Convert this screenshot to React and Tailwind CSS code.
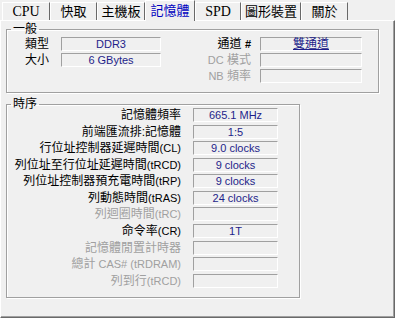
const tabs = [
  { name: "CPU", w: "w-[48px]", serif: true },
  { name: "快取", w: "w-[47px]" },
  { name: "主機板", w: "w-[48px]" },
  { name: "記憶體", w: "w-[50px]", active: true },
  { name: "SPD", w: "w-[46px]", serif: true },
  { name: "圖形裝置", w: "w-[60px]" },
  { name: "關於", w: "w-[47px]" },
];

const timings = [
  ["記憶體頻率", "", "665.1 MHz", true],
  ["前端匯流排:記憶體", "", "1:5", true],
  ["行位址控制器延遲時間", "(CL)", "9.0 clocks", true],
  ["列位址至行位址延遲時間", "(tRCD)", "9 clocks", true],
  ["列位址控制器預充電時間", "(tRP)", "9 clocks", true],
  ["列動態時間", "(tRAS)", "24 clocks", true],
  ["列迴圈時間", "(tRC)", "", false],
  ["命令率", "(CR)", "1T", true],
  ["記憶體閒置計時器", "", "", false],
  ["總計", " CAS# (tRDRAM)", "", false],
  ["列到行", "(tRCD)", "", false],
];

const Box = ({ w, children }) => (
  <div
    className={`${w} h-[14px] border-t border-l border-[#a0a0a0] border-b border-r border-b-white border-r-white text-center text-[11px] leading-[13px] text-[#1e1e8a] whitespace-nowrap`}
  >
    {children}
  </div>
);

const Group = ({ title, className, children }) => (
  <fieldset
    className={`${className} border border-[#a0a0a0] shadow-[inset_1px_1px_0_#fff,1px_1px_0_#fff]`}
  >
    <legend className="ml-[4px] px-[2px] text-[12px] leading-[12px] text-black">
      {title}
    </legend>
    {children}
  </fieldset>
);

export default function App() {
  return (
    <div className="w-[395px] h-[318px] bg-[#f0f0f0] overflow-hidden font-['Liberation_Sans','Noto_Sans_CJK_TC',sans-serif] text-black">
      {/* tab strip */}
      <div className="h-[20px] flex items-end pl-[2px]">
        {tabs.map((t) =>
          t.active ? (
            <div
              key={t.name}
              className={`${t.w} h-[21px] -mb-[1px] relative z-10 bg-[#f0f0f0] border-l border-t border-white border-r border-r-[#696969] text-center text-[13px] leading-[19px] text-[#0000c0]`}
            >
              {t.name}
            </div>
          ) : (
            <div
              key={t.name}
              className={`${t.w} h-[18px] border-l border-t border-white border-r border-r-[#696969] text-center leading-[17px] ${
                t.serif
                  ? "font-['Liberation_Serif',serif] text-[14px]"
                  : "text-[13px]"
              }`}
            >
              {t.name}
            </div>
          )
        )}
      </div>

      {/* tab page */}
      <div className="h-[298px] w-[395px] border-t border-l border-white border-r border-b border-r-[#696969] border-b-[#696969] shadow-[inset_-1px_-1px_0_#a0a0a0] pl-[5px] pt-[2px]">
        <Group title="一般" className="w-[373px] h-[70px]">
          <div className="flex flex-col gap-[2px] pt-[2px] text-[12px] leading-[14px]">
            <div className="flex">
              <div className="w-[54px] pl-[18px]">類型</div>
              <Box w="w-[100px]">DDR3</Box>
              <div className="w-[99px] pr-[9px] text-right">
                通道 <span className="text-[11px] font-bold">#</span>
              </div>
              <Box w="w-[102px]">
                <span className="text-[12px] underline">雙通道</span>
              </Box>
            </div>
            <div className="flex">
              <div className="w-[54px] pl-[18px]">大小</div>
              <Box w="w-[100px]">6 GBytes</Box>
              <div className="w-[99px] pr-[9px] text-right text-[#a0a0a0]">
                <span className="text-[11px]">DC</span> 模式
              </div>
              <Box w="w-[102px]" />
            </div>
            <div className="flex">
              <div className="w-[154px]" />
              <div className="w-[99px] pr-[9px] text-right text-[#a0a0a0]">
                <span className="text-[11px]">NB</span> 頻率
              </div>
              <Box w="w-[102px]" />
            </div>
          </div>
        </Group>

        <Group title="時序" className="w-[294px] h-[200px] mt-[5px]">
          <div className="flex flex-col -mt-[2px]">
            {timings.map(([cjk, latin, value, enabled], i) => (
              <div key={i} className="flex h-[16.57px]">
                <div
                  className={`w-[174px] text-right text-[12px] leading-[14px] whitespace-nowrap ${
                    enabled ? "text-black" : "text-[#a0a0a0]"
                  }`}
                >
                  {cjk}
                  <span className="text-[11px]">{latin}</span>
                </div>
                <div className="w-[12px]" />
                <Box w="w-[85px]">{value}</Box>
              </div>
            ))}
          </div>
        </Group>
      </div>
    </div>
  );
}
